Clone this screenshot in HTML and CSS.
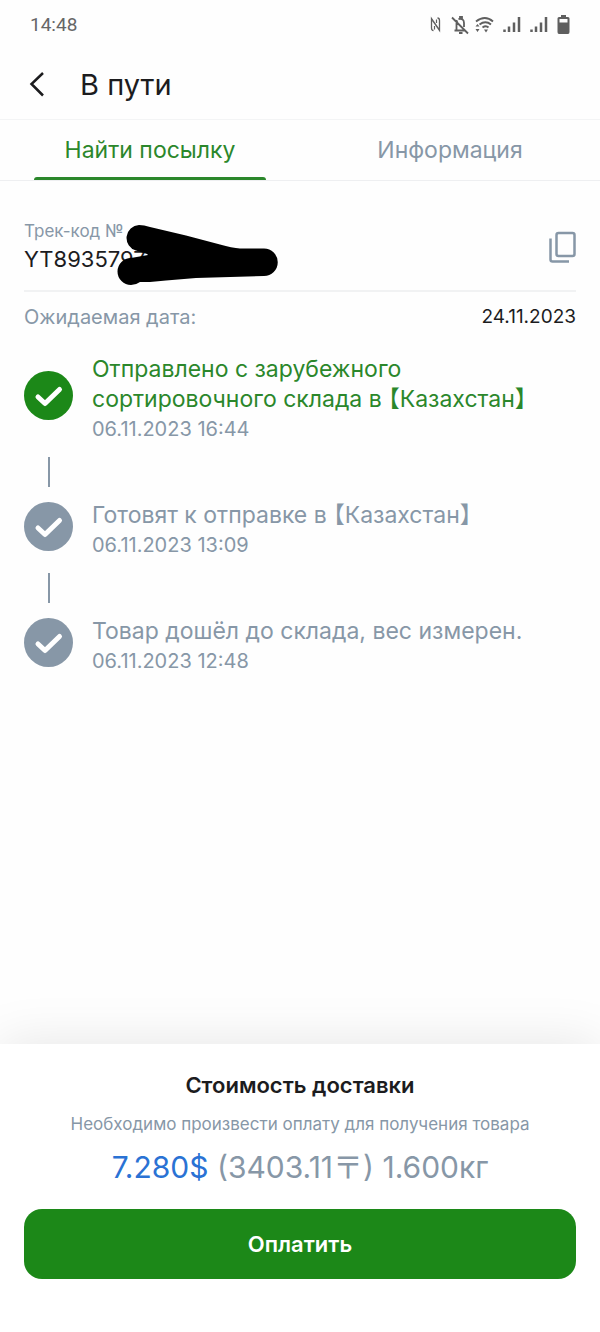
FILE: index.html
```html
<!DOCTYPE html>
<html lang="ru">
<head>
  <meta charset="UTF-8" />
  <meta name="viewport" content="width=device-width, initial-scale=1.0"/>
  <title>В пути</title>
  <link rel="stylesheet" href="styles.css">
</head>
<body>
  <div class="status-bar">
    <span class="clock">14:48</span>
    <svg class="status-icons" width="142" height="22" viewBox="0 0 142 22" fill="none" stroke="#5f5f5f" stroke-width="1.5">
      <!-- nfc -->
      <path d="M5.500 16.500Q3.500 16.500 3.500 14V4.500L10.500 14.500M4.500 6.500L11.500 16.500V6.500Q11.500 4 9.500 4" stroke-width="1.300"/>
      <path d="M6.500 12V15.500M8.500 5.500V9" stroke-width="1.200"/>
      <!-- muted bell -->
      <path d="M24 3.500L40 19.500M26.500 16.500H36.500M28.500 16.500V9Q28.500 7.500 29.500 6.500M30.500 5Q36 4 36 9V13M32 4.500V3H34V4.500" stroke-width="1.800"/>
      <path d="M31 19H34.500" stroke-width="2"/>
      <!-- wi-fi -->
      <path d="M48 7.500Q57 0.500 65 7.500M51.500 10.500Q57.500 6 63 10.500M54.500 13.500Q58 11 60.500 13.500" stroke-width="1.900"/>
      <path d="M49.500 10L51.500 12.500H47.500ZM49.500 18L47.500 15H51.500ZM56 15.500H60L58 18.500Z" fill="#5f5f5f" stroke="none"/>
      <!-- signal -->
      <path d="M76.500 18V15.500M81 18V12.500M86 18V8.500M91 18V3M103.500 18V15.500M108 18V12.500M113 18V8.500M118 18V3" stroke-width="2.500"/>
      <!-- battery -->
      <path d="M133 1H138V3H140Q141.500 3 141.500 4.500V18Q141.500 20 140 20H131Q129.500 20 129.500 18V4.500Q129.500 3 131 3H133ZM131.500 5V8.500H139.500V5Z" fill="#5f5f5f" fill-rule="evenodd" stroke="none"/>
    </svg>
  </div>

  <header class="header">
    <button class="icon-button" aria-label="Назад">
      <svg width="26" height="28" viewBox="0 0 26 28" fill="none" stroke="#1c1c1e" stroke-width="2.500">
        <path d="M19 2L7.500 13L19 24.500"/>
      </svg>
    </button>
    <h1>В пути</h1>
  </header>

  <nav class="tabs">
    <button class="tab active">Найти посылку</button>
    <button class="tab">Информация</button>
  </nav>

  <main class="content">
    <div class="track">
      <div class="track-info">
        <div class="track-label">Трек-код №</div>
        <div class="track-code">YT8935797</div>
        <svg class="scribble" width="162" height="62" viewBox="117 224 162 62">
          <path d="M139 225Q144 225 150 227L186 235.500L220 244.500Q232 248 240 248.500L264 248.500A13.700 13.700 0 0 1 264 276L196 278L166 280.500L150 282H140Q136 285 131 285A13.500 13.500 0 0 1 131 258L148 255L147 254L136 250.500A13 13 0 0 1 139 225Z"/>
        </svg>
      </div>
      <button class="icon-button" aria-label="Скопировать">
        <svg width="27" height="32" viewBox="0 0 27 32" fill="none" stroke="#8797a7" stroke-width="2.500">
          <rect x="7.500" y="2" width="18" height="23" rx="2"/>
          <path d="M1.500 7.500V28.500Q1.500 30.500 3.500 30.500H20"/>
        </svg>
      </button>
    </div>

    <div class="expected">
      <span>Ожидаемая дата:</span>
      <span class="date">24.11.2023</span>
    </div>

    <ol class="steps">
      <li class="step done">
        <div class="step-row">
          <svg class="check" viewBox="0 0 49 49">
            <circle cx="24.500" cy="24.500" r="24.500"/>
            <path d="M14 26L21 32.500L35.500 18.500"/>
          </svg>
          <div>
            <div class="step-title">Отправлено с зарубежного сортировочного склада в 【Казахстан】</div>
            <div class="step-date">06.11.2023 16:44</div>
          </div>
        </div>
      </li>
      <li class="step">
        <div class="step-row">
          <svg class="check" viewBox="0 0 49 49">
            <circle cx="24.500" cy="24.500" r="24.500"/>
            <path d="M14 26L21 32.500L35.500 18.500"/>
          </svg>
          <div>
            <div class="step-title">Готовят к отправке в 【Казахстан】</div>
            <div class="step-date">06.11.2023 13:09</div>
          </div>
        </div>
      </li>
      <li class="step">
        <div class="step-row">
          <svg class="check" viewBox="0 0 49 49">
            <circle cx="24.500" cy="24.500" r="24.500"/>
            <path d="M14 26L21 32.500L35.500 18.500"/>
          </svg>
          <div>
            <div class="step-title">Товар дошёл до склада, вес измерен.</div>
            <div class="step-date">06.11.2023 12:48</div>
          </div>
        </div>
      </li>
    </ol>
  </main>

  <footer class="payment">
    <h2>Стоимость доставки</h2>
    <p class="note">Необходимо произвести оплату для получения товара</p>
    <p class="price"><span class="usd">7.280$</span> (3403.11〒) 1.600кг</p>
    <button class="pay-button">Оплатить</button>
  </footer>
</body>
</html>
```
FILE: styles.css
```css
* {
  box-sizing: border-box;
}
body {
  font-family: Inter, "Noto Sans CJK SC", sans-serif;
  font-size: 20px;
  line-height: 30px;
  color: #8797a7;
  background-color: #fefefe;
  margin: 0;
  min-height: 100vh;
  display: flex;
  flex-direction: column;
}
h1, h2, p, ol {
  margin: 0;
  padding: 0;
  font-weight: 400;
}
button {
  font: inherit;
  color: inherit;
  background: none;
  border: none;
  padding: 0;
  cursor: pointer;
}
svg {
  display: block;
}
.status-bar {
  display: flex;
  justify-content: space-between;
  align-items: center;
  height: 50px;
  padding: 0 30px;
}
.clock {
  font-family: Roboto, sans-serif;
  font-size: 19px;
  color: #666;
}
.header {
  display: flex;
  align-items: center;
  gap: 30px;
  height: 70px;
  padding: 0 24px;
  border-bottom: 1px solid #f3f4f5;
}
.header h1 {
  font-size: 29px;
  color: #1c1c1e;
}
.tabs {
  display: flex;
  border-bottom: 1px solid #eeeff1;
}
.tab {
  flex: 1;
  height: 60px;
  position: relative;
  font-size: 23px;
}
.tab.active {
  color: #2b872b;
}
.tab.active::after {
  content: "";
  position: absolute;
  left: 34px;
  right: 34px;
  bottom: 0;
  height: 3px;
  border-radius: 3px 3px 0 0;
  background-color: #2b872b;
}
.content {
  flex: 1;
  padding: 38px 24px;
}
.track {
  display: flex;
  justify-content: space-between;
  align-items: center;
  padding-bottom: 16px;
  border-bottom: 2px solid #f1f2f3;
}
.track-info {
  position: relative;
}
.track-label {
  font-size: 17px;
  line-height: 25px;
}
.track-code {
  font-size: 22px;
  color: #1c1c1e;
}
.scribble {
  position: absolute;
  left: 93px;
  top: 5px;
}
.expected {
  display: flex;
  justify-content: space-between;
  padding: 10px 0 22px;
}
.date {
  font-size: 19px;
  color: #1c1c1e;
}
.steps {
  list-style: none;
}
.step + .step::before {
  content: "";
  display: block;
  width: 2px;
  height: 30px;
  margin: 13px 24px;
  background-color: #8797a7;
}
.step-row {
  display: flex;
  align-items: center;
  gap: 19px;
}
.step-title {
  font-size: 23px;
  font-feature-settings: "halt";
}
.step.done .step-title {
  color: #2b872b;
}
.check {
  flex: none;
  width: 49px;
  height: 49px;
  margin-bottom: 8px;
  fill: #8797a7;
}
.step.done .check {
  fill: #1c8818;
}
.check path {
  fill: none;
  stroke: #fff;
  stroke-width: 5;
  stroke-linecap: round;
  stroke-linejoin: round;
}
.payment {
  padding: 26px 24px 53px;
  text-align: center;
  background-color: #fff;
  box-shadow: 0 0 50px rgba(0,0,0,0.1);
}
.payment h2 {
  font-size: 22px;
  font-weight: 600;
  color: #1c1c1e;
}
.note {
  margin-top: 9px;
  font-size: 17px;
}
.price {
  margin-top: 8px;
  font-size: 30px;
  line-height: 40px;
}
.usd {
  color: #2a72d4;
}
.pay-button {
  display: block;
  width: 100%;
  height: 70px;
  margin-top: 22px;
  border-radius: 18px;
  background-color: #1c8818;
  color: #fff;
  font-size: 22px;
  font-weight: 600;
}
```
